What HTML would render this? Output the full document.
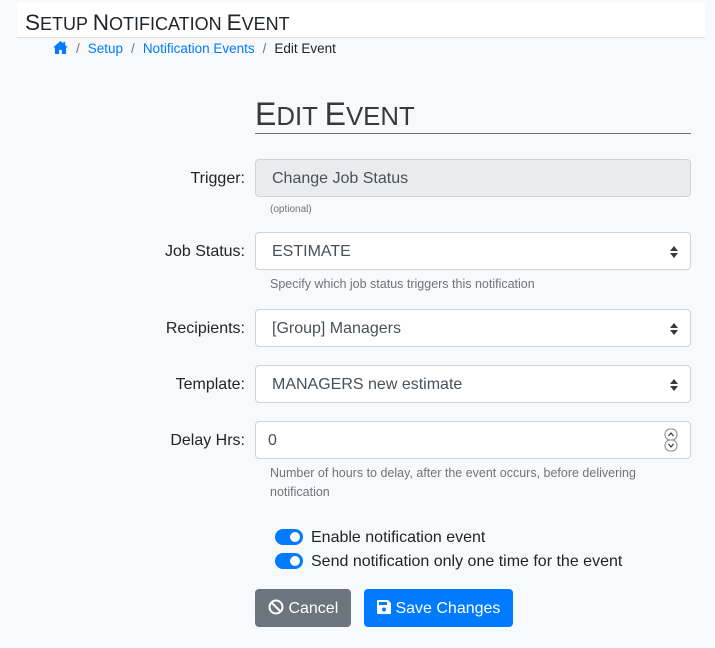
<!DOCTYPE html>
<html><head><style>
*{box-sizing:border-box;margin:0;padding:0}
body{width:715px;height:648px;background:#f8f9fa;font-family:"Liberation Sans",sans-serif;color:#212529;position:relative;overflow:hidden}
.hdr{position:absolute;left:17px;top:3px;width:688px;height:35px;background:#fff;border-bottom:1px solid #dee2e6}
.hdr h1{position:absolute;left:8px;top:8px;font-size:18px;font-weight:normal;text-transform:uppercase;color:#212529;line-height:24px}
.hdr h1 b,h2 b{font-weight:normal}
.hdr h1 b{font-size:22.5px}
.bc{position:absolute;top:41px;left:53px;font-size:13.5px;line-height:16px;color:#6c757d}
.bc a{color:#007bff;text-decoration:none}
.bc span{margin:0 8px}
h2{position:absolute;left:255px;top:96px;width:436px;font-size:25.8px;font-weight:normal;text-transform:uppercase;color:#343a40;border-bottom:1px solid #6c757d;height:38px;line-height:36px}
h2 b{font-size:32px}
.lbl{position:absolute;right:470px;font-size:16px;text-align:right}
.in{position:absolute;left:255px;width:436px;height:38px;border:1px solid #ced4da;border-radius:4px;background:#fff;font-size:16px;padding:0 16px;line-height:38px;color:#495057}
.help{position:absolute;left:270px;font-size:12.5px;color:#6c757d;line-height:19px}
.arr{position:absolute;right:12px;top:13px}
.tg{position:absolute;left:275px;width:28px;height:16px;border-radius:8px;background:#007bff}
.tg:after{content:"";position:absolute;right:3px;top:3px;width:10px;height:10px;border-radius:50%;background:#fff}
.tl{position:absolute;left:311px;font-size:16px}
.btn{position:absolute;top:589px;height:38px;border-radius:4px;color:#fff;font-size:16px;line-height:39px}
</style></head><body>
<div class="hdr"><h1><b>S</b>etup <b>N</b>otification <b>E</b>vent</h1></div>
<div class="bc"><svg width="15" height="13" viewBox="0 0 16 14" style="vertical-align:-1px"><path d="M8 0L0 7h2v7h4.5V9.5h3V14H14V7h2L13 4.4V1h-2v1.7z" fill="#007bff"/></svg><span>/</span><a>Setup</a><span>/</span><a>Notification Events</a><span>/</span><span style="margin:0;color:#212529">Edit Event</span></div>
<h2><b>E</b>dit <b>E</b>vent</h2>
<div class="lbl" style="top:170px">Trigger:</div>
<div class="in" style="top:159px;background:#e9ecef">Change Job Status</div>
<div class="help" style="top:200px;font-size:10px">(optional)</div>
<div class="lbl" style="top:243px">Job Status:</div>
<div class="in" style="top:232px">ESTIMATE<svg class="arr" width="8" height="12" viewBox="0 0 8 12"><path d="M4 0L8 5H0zM4 12L0 7h8z" fill="#343a40"/></svg></div>
<div class="help" style="top:275px">Specify which job status triggers this notification</div>
<div class="lbl" style="top:320px">Recipients:</div>
<div class="in" style="top:309px">[Group] Managers<svg class="arr" width="8" height="12" viewBox="0 0 8 12"><path d="M4 0L8 5H0zM4 12L0 7h8z" fill="#343a40"/></svg></div>
<div class="lbl" style="top:376px">Template:</div>
<div class="in" style="top:365px">MANAGERS new estimate<svg class="arr" width="8" height="12" viewBox="0 0 8 12"><path d="M4 0L8 5H0zM4 12L0 7h8z" fill="#343a40"/></svg></div>
<div class="lbl" style="top:432px">Delay Hrs:</div>
<div class="in" style="top:421px;padding-left:12px">0<svg style="position:absolute;right:12px;top:6px" width="14" height="24" viewBox="0 0 14 24"><rect x="1" y="1" width="12" height="11" rx="5" fill="none" stroke="#888"/><rect x="1" y="12" width="12" height="11" rx="5" fill="none" stroke="#888"/><path d="M4.5 8l2.5-3 2.5 3M4.5 16l2.5 3 2.5-3" fill="none" stroke="#333" stroke-width="1.2"/></svg></div>
<div class="help" style="top:464px">Number of hours to delay, after the event occurs, before delivering<br>notification</div>
<div class="tg" style="top:529px"></div><div class="tl" style="top:529px">Enable notification event</div>
<div class="tg" style="top:553px"></div><div class="tl" style="top:553px">Send notification only one time for the event</div>
<div class="btn" style="left:255px;width:96px;background:#6c757d;padding-left:13px"><svg width="16" height="16" viewBox="0 0 16 16" style="vertical-align:-2px"><circle cx="8" cy="8" r="6.5" fill="none" stroke="#fff" stroke-width="2"/><path d="M3.5 3.5l9 9" stroke="#fff" stroke-width="2"/></svg> Cancel</div>
<div class="btn" style="left:364px;width:149px;background:#007bff;padding-left:13px"><svg width="14" height="14" viewBox="0 0 14 14" style="vertical-align:-1px"><path d="M0 1a1 1 0 011-1h10l3 3v10a1 1 0 01-1 1H1a1 1 0 01-1-1z" fill="#fff"/><rect x="2" y="2" width="8" height="3" fill="#007bff"/><circle cx="7" cy="9.5" r="2" fill="#007bff"/></svg> Save Changes</div>
</body></html>
